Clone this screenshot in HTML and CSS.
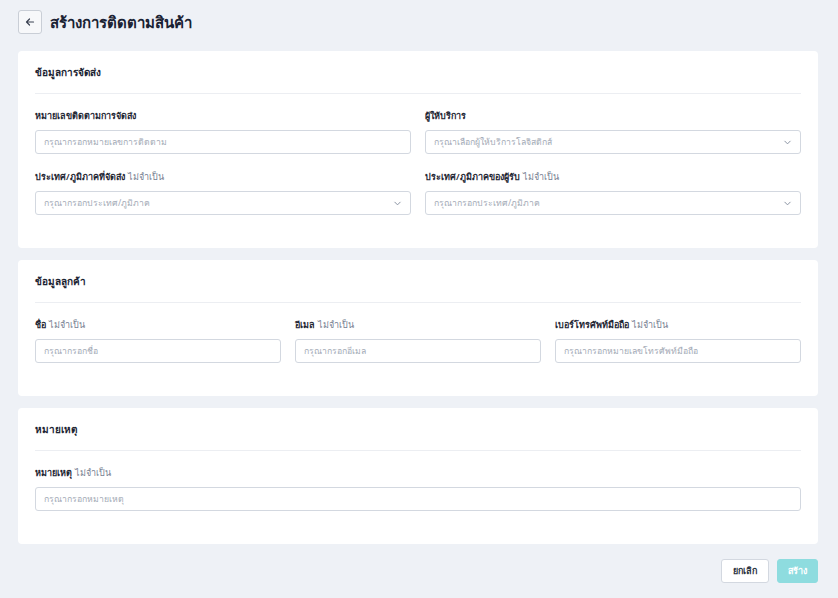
FILE: index.html
```html
<!DOCTYPE html>
<html lang="th">
<head>
    <meta charset="UTF-8">
    <meta name="viewport" content="width=device-width, initial-scale=1.0">
    <title>สร้างการติดตามสินค้า</title>
    <link rel="stylesheet" href="styles.css">
</head>
<body>
    <div id="page">
        <div class="page-header">
            <button class="back-btn" type="button">
                <svg width="10" height="10" viewBox="0 0 10 10" fill="none" stroke="#3b4252" stroke-width="1.2" stroke-linecap="round" stroke-linejoin="round">
                    <path d="M8.5 5H1.5M4.5 2L1.5 5L4.5 8"/>
                </svg>
            </button>
            <h1 class="page-title">สร้างการติดตามสินค้า</h1>
        </div>

        <div class="card">
            <div class="card-title">ข้อมูลการจัดส่ง</div>
            <div class="card-body">
                <div class="grid grid-2">
                    <div class="field">
                        <label class="label">หมายเลขติดตามการจัดส่ง</label>
                        <div class="input"><span class="ph">กรุณากรอกหมายเลขการติดตาม</span></div>
                    </div>
                    <div class="field">
                        <label class="label">ผู้ให้บริการ</label>
                        <div class="input select"><span class="ph">กรุณาเลือกผู้ให้บริการโลจิสติกส์</span><svg class="chev" width="9" height="9" viewBox="0 0 10 10" fill="none" stroke="#8a93a3" stroke-width="1.1" stroke-linecap="round" stroke-linejoin="round"><path d="M2 3.5L5 6.5L8 3.5"/></svg></div>
                    </div>
                    <div class="field">
                        <label class="label">ประเทศ/ภูมิภาคที่จัดส่ง <span class="opt">ไม่จำเป็น</span></label>
                        <div class="input select"><span class="ph">กรุณากรอกประเทศ/ภูมิภาค</span><svg class="chev" width="9" height="9" viewBox="0 0 10 10" fill="none" stroke="#8a93a3" stroke-width="1.1" stroke-linecap="round" stroke-linejoin="round"><path d="M2 3.5L5 6.5L8 3.5"/></svg></div>
                    </div>
                    <div class="field">
                        <label class="label">ประเทศ/ภูมิภาคของผู้รับ <span class="opt">ไม่จำเป็น</span></label>
                        <div class="input select"><span class="ph">กรุณากรอกประเทศ/ภูมิภาค</span><svg class="chev" width="9" height="9" viewBox="0 0 10 10" fill="none" stroke="#8a93a3" stroke-width="1.1" stroke-linecap="round" stroke-linejoin="round"><path d="M2 3.5L5 6.5L8 3.5"/></svg></div>
                    </div>
                </div>
            </div>
        </div>

        <div class="card">
            <div class="card-title">ข้อมูลลูกค้า</div>
            <div class="card-body">
                <div class="grid grid-3">
                    <div class="field">
                        <label class="label">ชื่อ <span class="opt">ไม่จำเป็น</span></label>
                        <div class="input"><span class="ph">กรุณากรอกชื่อ</span></div>
                    </div>
                    <div class="field">
                        <label class="label">อีเมล <span class="opt">ไม่จำเป็น</span></label>
                        <div class="input"><span class="ph">กรุณากรอกอีเมล</span></div>
                    </div>
                    <div class="field">
                        <label class="label">เบอร์โทรศัพท์มือถือ <span class="opt">ไม่จำเป็น</span></label>
                        <div class="input"><span class="ph">กรุณากรอกหมายเลขโทรศัพท์มือถือ</span></div>
                    </div>
                </div>
            </div>
        </div>

        <div class="card">
            <div class="card-title">หมายเหตุ</div>
            <div class="card-body">
                <div class="field">
                    <label class="label">หมายเหตุ <span class="opt">ไม่จำเป็น</span></label>
                    <div class="input"><span class="ph">กรุณากรอกหมายเหตุ</span></div>
                </div>
            </div>
        </div>

        <div class="actions">
            <button class="btn btn-cancel" type="button">ยกเลิก</button>
            <button class="btn btn-create" type="button">สร้าง</button>
        </div>
    </div>
</body>
</html>
```

FILE: styles.css
```css
body {
    margin: 0;
    padding: 0;
    background-color: #eef1f6;
    font-family: "Noto Sans", "Open Sans", sans-serif;
    color: #1c2433;
}
#page {
    padding: 10px 20px 16px 18px;
}
.page-header {
    display: flex;
    align-items: center;
    gap: 8px;
    margin-bottom: 17px;
}
.back-btn {
    width: 24px;
    height: 24px;
    padding: 0;
    display: flex;
    align-items: center;
    justify-content: center;
    background-color: #f7f8fa;
    border: 1px solid #c9ced6;
    border-radius: 3px;
}
.page-title {
    margin: 0;
    font-size: 15px;
    font-weight: 700;
    line-height: 24px;
    color: #1a2233;
}
.card {
    background-color: #fff;
    border-radius: 4px;
    padding: 0 17px;
    margin-bottom: 12px;
}
.card-title {
    font-size: 10px;
    font-weight: 700;
    line-height: 16px;
    padding: 13px 0 13px;
    border-bottom: 1px solid #eceef2;
}
.card-body {
    padding: 15px 0 17px;
}
.grid {
    display: grid;
    column-gap: 14px;
}
.grid-2 {
    grid-template-columns: 1fr 1fr;
}
.grid-3 {
    grid-template-columns: 1fr 1fr 1fr;
}
.field {
    margin-bottom: 16px;
}
.label {
    display: block;
    font-size: 9px;
    font-weight: 600;
    line-height: 14px;
    margin-bottom: 7px;
    color: #1f2735;
}
.opt {
    font-weight: 400;
    color: #768091;
    margin-left: 1px;
}
.input {
    height: 24px;
    box-sizing: border-box;
    border: 1px solid #d3d8e0;
    border-radius: 3px;
    padding: 0 8px;
    display: flex;
    align-items: center;
    justify-content: space-between;
}
.ph {
    font-size: 8.7px;
    color: #a3aab6;
}
.actions {
    display: flex;
    justify-content: flex-end;
    gap: 8px;
    padding-top: 3px;
}
.btn {
    height: 24px;
    border-radius: 3px;
    font-family: inherit;
    font-size: 9px;
    font-weight: 600;
    padding: 0 10px;
}
.btn-cancel {
    background-color: #fff;
    border: 1px solid #d3d8e0;
    color: #2a3140;
    padding: 0 11px;
}
.btn-create {
    background-color: #8edcdf;
    border: 1px solid #8edcdf;
    color: #ffffff;
}
```
